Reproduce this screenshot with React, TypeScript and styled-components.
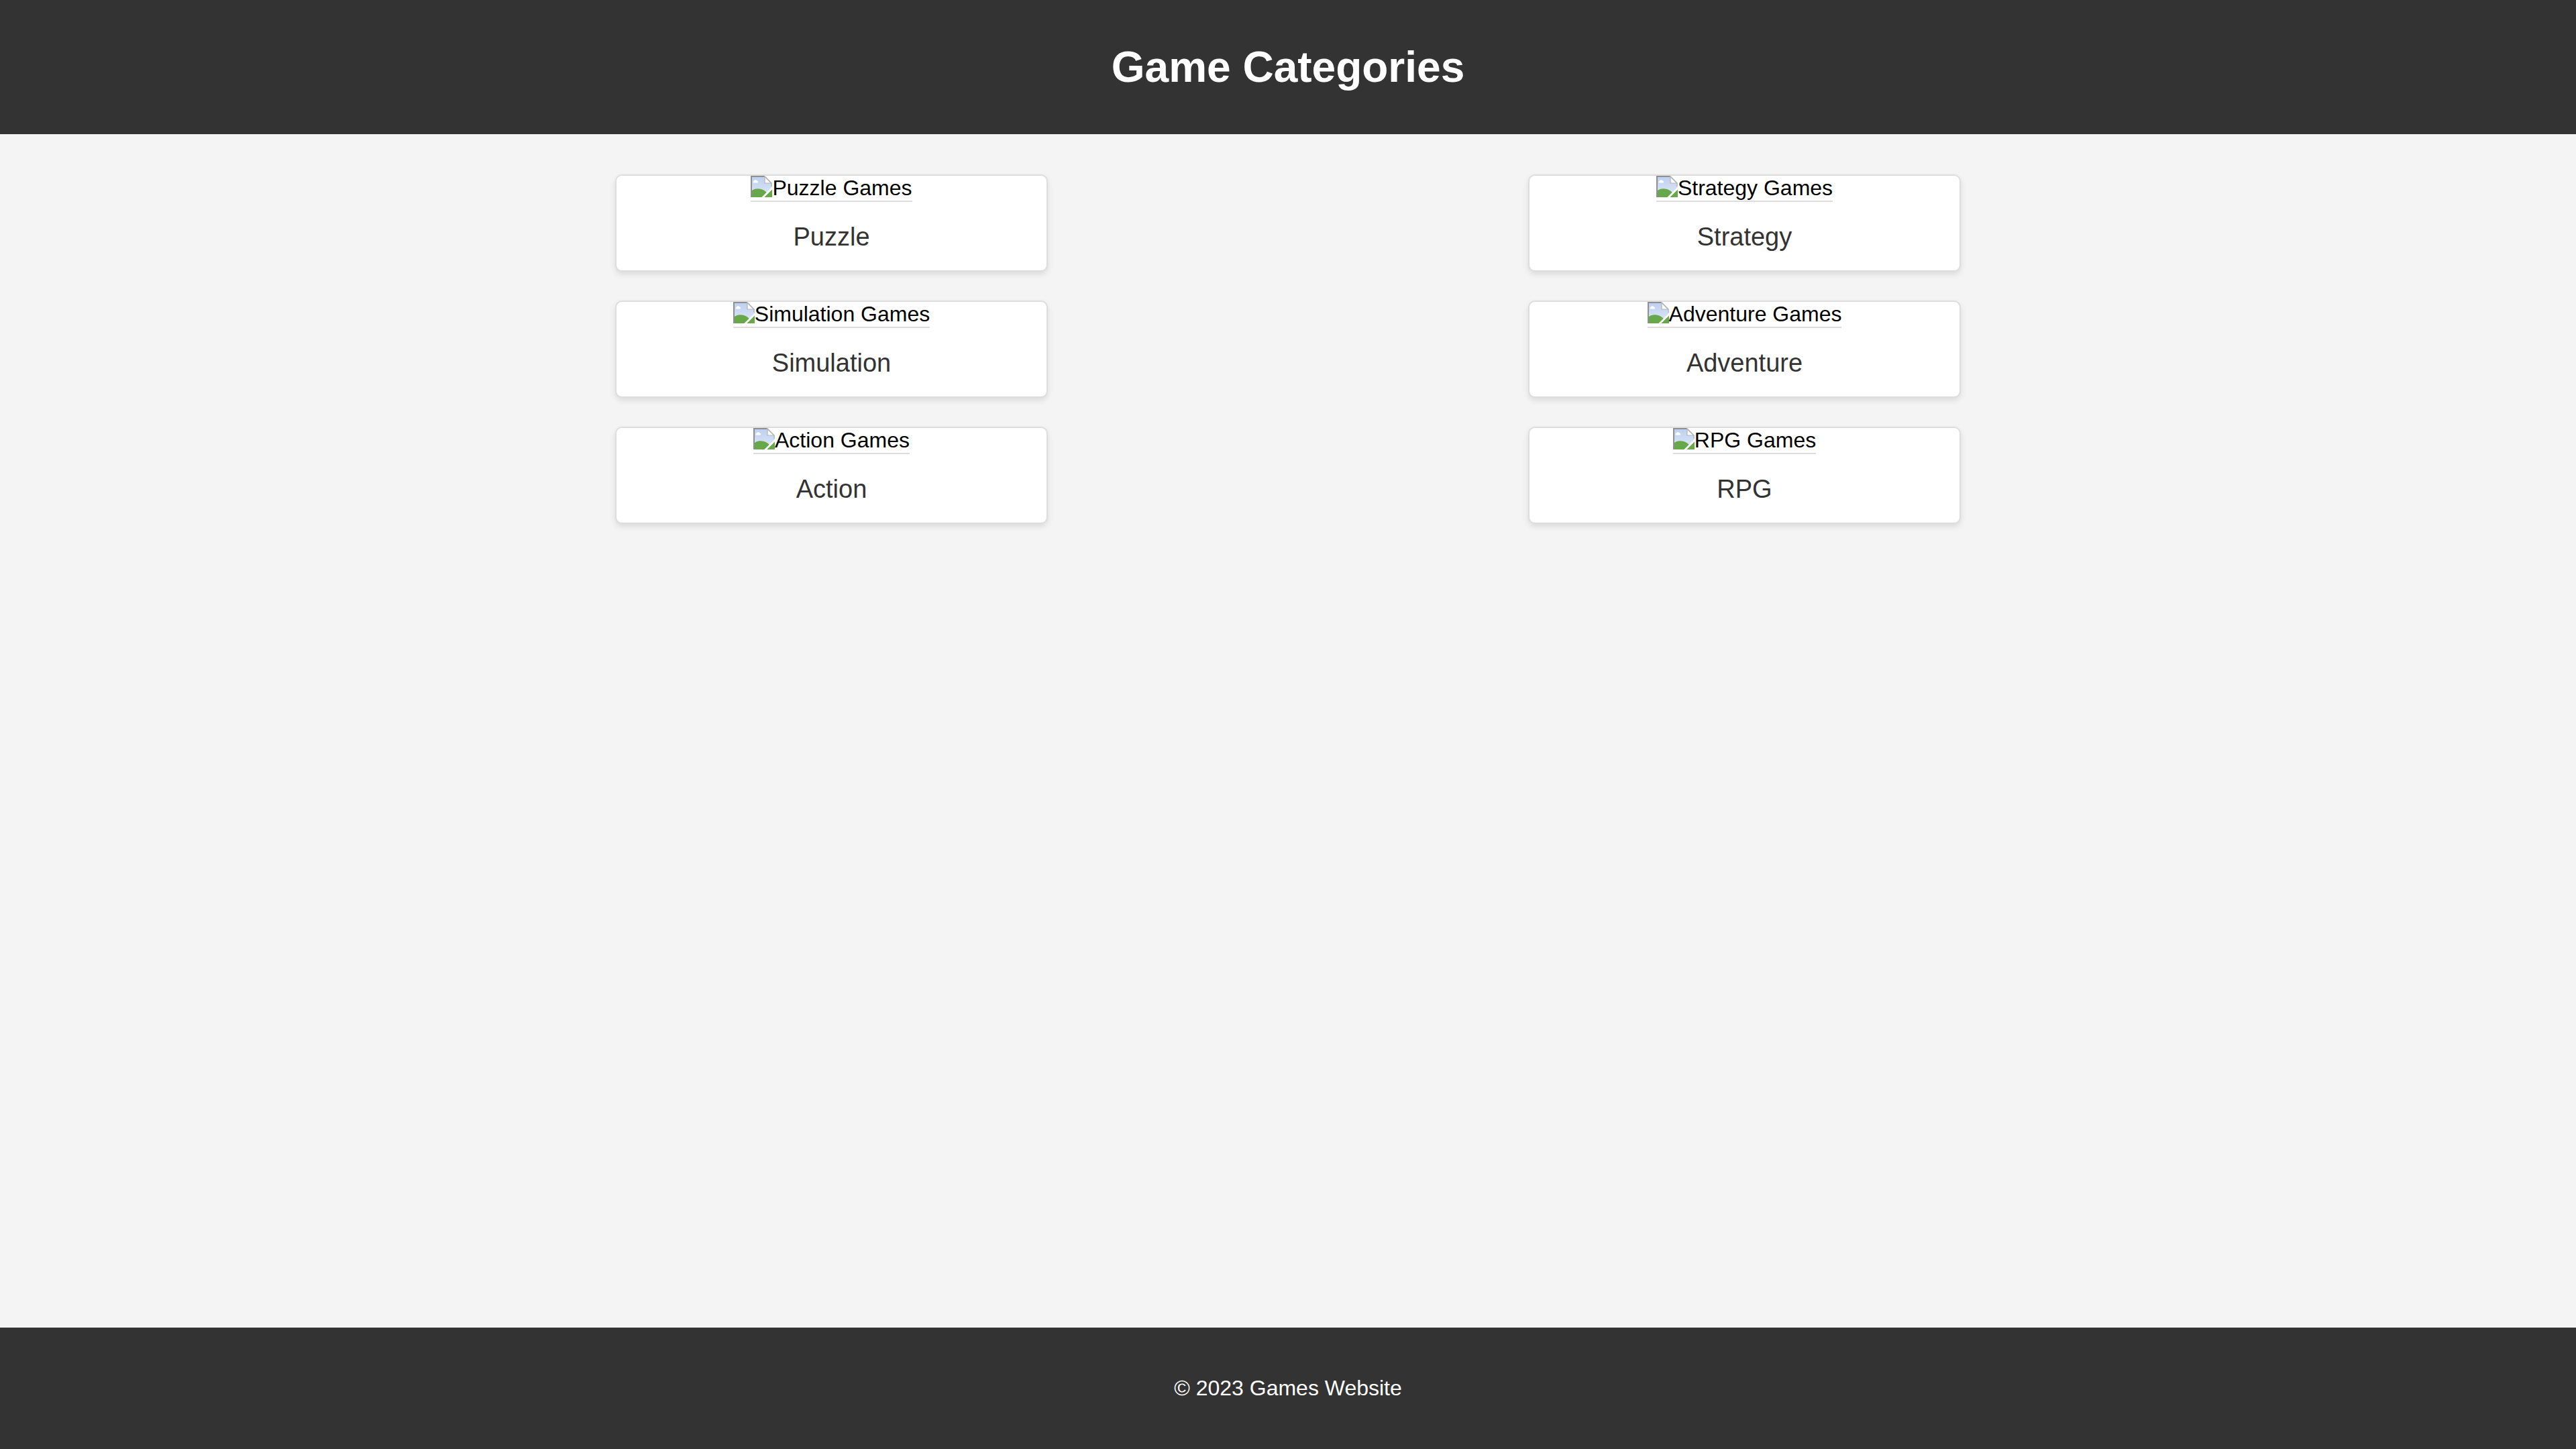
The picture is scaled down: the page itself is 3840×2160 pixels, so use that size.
import React, { useId } from "react";
import styled, { createGlobalStyle } from "styled-components";

const GlobalStyle = createGlobalStyle`
  html, body {
    margin: 0;
    padding: 0;
  }
  body {
    background: #f4f4f4;
    font-family: "Liberation Sans", Arial, sans-serif;
  }
`;

const Page = styled.div`
  min-height: 100vh;
  display: flex;
  flex-direction: column;
`;

const Header = styled.header`
  background: #333333;
  color: #ffffff;
  padding: 20px;
  text-align: center;
`;

const Title = styled.h1`
  margin: 43px 0;
  font-size: 64px;
  font-weight: bold;
  line-height: normal;
`;

const Main = styled.main`
  flex: 1;
  padding-top: 60px;
`;

const Grid = styled.ul`
  list-style: none;
  margin: 0 auto;
  padding: 0;
  width: 2722px;
  display: grid;
  grid-template-columns: 1fr 1fr;
  grid-template-rows: repeat(3, auto);
  grid-auto-flow: column;
  row-gap: 43px;
  justify-items: center;
`;

const Card = styled.li`
  box-sizing: border-box;
  width: 645px;
  background: #ffffff;
  border: 2px solid #dddddd;
  border-radius: 10px;
  box-shadow: 0 4px 8px rgba(0, 0, 0, 0.1);
  text-align: center;
  overflow: hidden;
  line-height: 0;
`;

const Picture = styled.div`
  display: inline-flex;
  align-items: flex-start;
  height: 37px;
  border-bottom: 2px solid #dddddd;
  font-size: 32px;
  line-height: 37px;
  color: #000000;
  vertical-align: top;
`;

const Label = styled.p`
  margin: 0;
  padding: 30px 0 28px;
  font-size: 38px;
  line-height: 44px;
  color: #333333;
`;

const Footer = styled.footer`
  background: #333333;
  color: #ffffff;
  padding: 40px;
  text-align: center;
`;

const FooterText = styled.p`
  margin: 32px 0;
  font-size: 32px;
  line-height: normal;
`;

function BrokenImageIcon() {
  const id = useId().replace(/:/g, "");
  return (
    <svg width="32" height="32" viewBox="0 0 16 16" aria-hidden="true">
      <defs>
        <linearGradient id={`sky${id}`} x1="0" y1="0" x2="0" y2="1">
          <stop offset="0" stopColor="#bccff0" />
          <stop offset="1" stopColor="#dfe8f7" />
        </linearGradient>
        <clipPath id={`pg${id}`}>
          <path d="M0 0H10.5L16 5.5V8.2L8.2 16H0Z" />
        </clipPath>
        <clipPath id={`fr${id}`}>
          <path d="M16 10.2V16H10.2Z" />
        </clipPath>
      </defs>
      <g clipPath={`url(#pg${id})`}>
        <rect width="16" height="16" fill={`url(#sky${id})`} />
        <path d="M2.3 5.2C1.6 5.2 1.6 4 2.4 4C2.5 2.9 4.3 2.7 4.6 3.8C5.4 3.6 5.8 4.5 5.3 5.2Z" fill="#ffffff" />
        <path d="M0 16V11.8C2.6 9.2 6.8 8.8 10.5 11.2L16 16Z" fill="#66a84a" />
        <path d="M0.5 16V0.5H10.3" fill="none" stroke="#8f8f8f" strokeWidth="1" />
      </g>
      <g clipPath={`url(#fr${id})`}>
        <rect width="16" height="16" fill="#66a84a" />
      </g>
      <path d="M10.5 0.5V5.5H15.5Z" fill="#ffffff" stroke="#b5b5b5" strokeWidth="0.6" strokeLinejoin="round" />
      <path d="M10.3 0.5L15.5 5.7V8" fill="none" stroke="#b5b5b5" strokeWidth="0.6" />
    </svg>
  );
}

type Category = { name: string };

const categories: Category[] = [
  { name: "Puzzle" },
  { name: "Simulation" },
  { name: "Action" },
  { name: "Strategy" },
  { name: "Adventure" },
  { name: "RPG" },
];

function CategoryCard({ name }: Category) {
  return (
    <Card>
      <Picture role="img" aria-label={`${name} Games`}>
        <BrokenImageIcon />
        <span>{name} Games</span>
      </Picture>
      <Label>{name}</Label>
    </Card>
  );
}

export default function App() {
  return (
    <>
      <GlobalStyle />
      <Page>
        <Header>
          <Title>Game Categories</Title>
        </Header>
        <Main>
          <Grid>
            {categories.map((c) => (
              <CategoryCard key={c.name} {...c} />
            ))}
          </Grid>
        </Main>
        <Footer>
          <FooterText>© 2023 Games Website</FooterText>
        </Footer>
      </Page>
    </>
  );
}
